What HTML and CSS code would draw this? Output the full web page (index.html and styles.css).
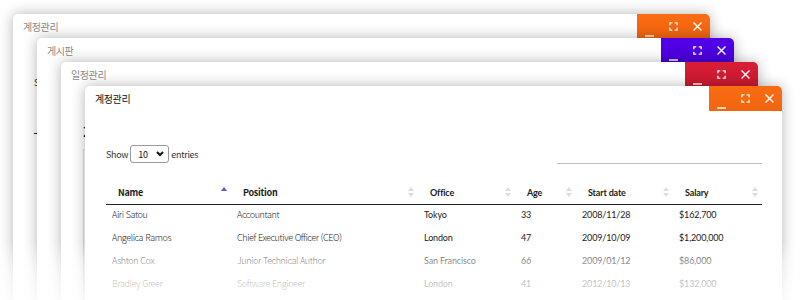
FILE: index.html
```html
<!DOCTYPE html>
<html lang="ko">
<head>
  <meta charset="UTF-8" />
  <meta name="viewport" content="width=device-width, initial-scale=1.0" />
  <title>계정관리</title>
  <link rel="stylesheet" href="styles.css">
</head>
<body>
  <div class="desktop">

    <!-- 뒤쪽 창: 계정관리 -->
    <section class="window win-1">
      <div class="titlebar">
        <span class="title">계정관리</span>
        <div class="controls orange">
          <button class="btn-min"><svg width="9" height="16" viewBox="0 0 9 16"><path d="M0 14h9" stroke="#fff" stroke-width="1.5"/></svg></button>
          <button><svg width="9" height="9" viewBox="-1 -1 11 11"><path d="M0 3V0h3M6 0h3v3M9 6v3H6M3 9H0V6" stroke="#fff" stroke-width="1.6" fill="none"/></svg></button>
          <button><svg width="9" height="9" viewBox="0 0 9 9"><path d="M0.5 0.5l8 8M8.5 0.5l-8 8" stroke="#fff" stroke-width="1.4"/></svg></button>
        </div>
      </div>
      <div class="content">
        <div class="toolbar">
          <div class="length">Show</div>
        </div>
        <div class="head-line"></div>
      </div>
    </section>

    <!-- 게시판 -->
    <section class="window win-2">
      <div class="titlebar">
        <span class="title">게시판</span>
        <div class="controls purple">
          <button class="btn-min"><svg width="9" height="16" viewBox="0 0 9 16"><path d="M0 14h9" stroke="#fff" stroke-width="1.5"/></svg></button>
          <button><svg width="9" height="9" viewBox="-1 -1 11 11"><path d="M0 3V0h3M6 0h3v3M9 6v3H6M3 9H0V6" stroke="#fff" stroke-width="1.6" fill="none"/></svg></button>
          <button><svg width="9" height="9" viewBox="0 0 9 9"><path d="M0.5 0.5l8 8M8.5 0.5l-8 8" stroke="#fff" stroke-width="1.4"/></svg></button>
        </div>
      </div>
      <div class="content"></div>
    </section>

    <!-- 일정관리 -->
    <section class="window win-3">
      <div class="titlebar">
        <span class="title">일정관리</span>
        <div class="controls red">
          <button class="btn-min"><svg width="9" height="16" viewBox="0 0 9 16"><path d="M0 14h9" stroke="#fff" stroke-width="1.5"/></svg></button>
          <button><svg width="9" height="9" viewBox="-1 -1 11 11"><path d="M0 3V0h3M6 0h3v3M9 6v3H6M3 9H0V6" stroke="#fff" stroke-width="1.6" fill="none"/></svg></button>
          <button><svg width="9" height="9" viewBox="0 0 9 9"><path d="M0.5 0.5l8 8M8.5 0.5l-8 8" stroke="#fff" stroke-width="1.4"/></svg></button>
        </div>
      </div>
      <div class="content cal">
        <h3 class="cal-head">2021.05</h3>
        <div class="cal-box"></div>
      </div>
    </section>

    <!-- 앞쪽 창: 계정관리 -->
    <section class="window win-4 active">
      <div class="titlebar">
        <span class="title">계정관리</span>
        <div class="controls orange">
          <button class="btn-min"><svg width="9" height="16" viewBox="0 0 9 16"><path d="M0 14h9" stroke="#fff" stroke-width="1.5"/></svg></button>
          <button><svg width="9" height="9" viewBox="-1 -1 11 11"><path d="M0 3V0h3M6 0h3v3M9 6v3H6M3 9H0V6" stroke="#fff" stroke-width="1.6" fill="none"/></svg></button>
          <button><svg width="9" height="9" viewBox="0 0 9 9"><path d="M0.5 0.5l8 8M8.5 0.5l-8 8" stroke="#fff" stroke-width="1.4"/></svg></button>
        </div>
      </div>
      <div class="content">
        <div class="toolbar">
          <div class="length">Show <span class="select">10 <svg width="8" height="6" viewBox="0 0 8 6"><path d="M1 1l3 3 3-3" stroke="#111" stroke-width="2" fill="none"/></svg></span> entries</div>
          <div class="search"></div>
        </div>

        <table class="data">
          <colgroup>
            <col style="width:125px"><col style="width:187px"><col style="width:97px">
            <col style="width:61px"><col style="width:97px"><col style="width:89px">
          </colgroup>
          <thead>
            <tr>
              <th><div class="th-in">Name <svg class="sort" width="6" height="10" viewBox="0 0 6 10"><path d="M3 0L6 4H0z" fill="#5a55d6"/></svg></div></th>
              <th><div class="th-in">Position <svg class="sort" width="6" height="10" viewBox="0 0 6 10"><path d="M3 0L6 4H0zM0 6h6L3 10z" fill="#ddd"/></svg></div></th>
              <th class="lato"><div class="th-in">Office <svg class="sort" width="6" height="10" viewBox="0 0 6 10"><path d="M3 0L6 4H0zM0 6h6L3 10z" fill="#ddd"/></svg></div></th>
              <th class="lato"><div class="th-in">Age <svg class="sort" width="6" height="10" viewBox="0 0 6 10"><path d="M3 0L6 4H0zM0 6h6L3 10z" fill="#ddd"/></svg></div></th>
              <th class="lato"><div class="th-in">Start date <svg class="sort" width="6" height="10" viewBox="0 0 6 10"><path d="M3 0L6 4H0zM0 6h6L3 10z" fill="#ddd"/></svg></div></th>
              <th class="lato"><div class="th-in">Salary <svg class="sort" width="6" height="10" viewBox="0 0 6 10"><path d="M3 0L6 4H0zM0 6h6L3 10z" fill="#ddd"/></svg></div></th>
            </tr>
          </thead>
          <tbody>
            <tr>
              <td>Airi Satou</td><td>Accountant</td>
              <td class="lato">Tokyo</td><td class="lato">33</td><td class="lato">2008/11/28</td><td class="lato">$162,700</td>
            </tr>
            <tr>
              <td>Angelica Ramos</td><td>Chief Executive Officer (CEO)</td>
              <td class="lato">London</td><td class="lato">47</td><td class="lato">2009/10/09</td><td class="lato">$1,200,000</td>
            </tr>
            <tr>
              <td>Ashton Cox</td><td>Junior Technical Author</td>
              <td class="lato">San Francisco</td><td class="lato">66</td><td class="lato">2009/01/12</td><td class="lato">$86,000</td>
            </tr>
            <tr>
              <td>Bradley Greer</td><td>Software Engineer</td>
              <td class="lato">London</td><td class="lato">41</td><td class="lato">2012/10/13</td><td class="lato">$132,000</td>
            </tr>
          </tbody>
        </table>
      </div>
    </section>

    <div class="fade"></div>
  </div>
</body>
</html>
```

FILE: styles.css
```css
body {
  margin: 0;
  background: #fff;
  font-family: "Noto Sans CJK KR", "Noto Sans", sans-serif;
  overflow: hidden;
}
.desktop {
  position: relative;
  width: 800px;
  height: 300px;
  overflow: hidden;
}
.window {
  position: absolute;
  width: 697px;
  height: 330px;
  background: #fff;
  border-radius: 5px 5px 0 0;
  box-shadow: 0 0 14px rgba(0, 0, 0, 0.3);
}
.win-1 { left: 13px; top: 14px; }
.win-2 { left: 37px; top: 38px; }
.win-3 { left: 61px; top: 62px; }
.win-4 { left: 85px; top: 86px; }

.titlebar {
  display: flex;
  align-items: center;
  height: 25px;
}
.title {
  flex: 1;
  padding-left: 10px;
  font-size: 10px;
  letter-spacing: -0.4px;
  color: #8a8a8a;
}
.active .title {
  color: #111;
}
.controls {
  display: flex;
  width: 73px;
  height: 100%;
  border-top-right-radius: 5px;
}
.controls.orange { background: linear-gradient(#fa6c12, #f2650f); }
.controls.purple { background: linear-gradient(#5300ea, #4a00d9); }
.controls.red { background: linear-gradient(#d81d36, #c91a30); }
.controls button {
  flex: 1;
  display: flex;
  align-items: center;
  justify-content: center;
  border: none;
  background: none;
  padding: 0;
}
.controls .btn-min {
  padding-top: 6px;
}

.content {
  padding: 34px 20px 0 21px;
}
.toolbar {
  display: flex;
  justify-content: space-between;
  align-items: center;
  height: 18px;
}
.length {
  display: flex;
  align-items: center;
  gap: 2px;
  font-size: 9px;
  letter-spacing: -0.3px;
  color: #333;
}
.select {
  display: flex;
  align-items: center;
  justify-content: space-between;
  box-sizing: border-box;
  width: 39px;
  height: 18px;
  padding: 0 4px 0 7px;
  border: 1px solid #9a9a9a;
  border-radius: 3px;
  color: #111;
}
.search {
  align-self: flex-end;
  width: 205px;
  margin-bottom: -1px;
  border-bottom: 1px solid #bbb;
}
.head-line {
  margin-top: 42px;
  border-bottom: 1px solid #222;
}

.data {
  width: 100%;
  margin-top: 17px;
  border-collapse: collapse;
  table-layout: fixed;
  font-size: 9px;
}
.data th {
  height: 24px;
  padding: 0 4px 0 12px;
  text-align: left;
  font-weight: bold;
  letter-spacing: -0.25px;
  color: #1a1a1a;
  border-bottom: 1px solid #222;
}
.th-in {
  display: flex;
  align-items: center;
  justify-content: space-between;
}
.data td {
  padding: 3px 6px 7px;
  line-height: 13px;
  letter-spacing: -0.4px;
  font-weight: 300;
  color: #222;
  white-space: nowrap;
}
.data .lato {
  font-family: Lato, "Noto Sans", sans-serif;
  font-size: 9px;
  letter-spacing: -0.15px;
}
.data td.lato {
  font-weight: 400;
}

.cal-head {
  margin: 0 0 0 1px;
  font-size: 15px;
  line-height: 20px;
  color: #222;
}
.cal-box {
  margin-top: 8px;
  margin-left: 1px;
  height: 200px;
  border: 1px solid #e2e2e2;
}

.fade {
  position: absolute;
  left: 0;
  right: 0;
  bottom: 0;
  height: 58px;
  background: linear-gradient(rgba(255, 255, 255, 0), rgba(255, 255, 255, 0.5) 35%, rgba(255, 255, 255, 0.72) 72%, rgba(255, 255, 255, 0.85));
}
```
